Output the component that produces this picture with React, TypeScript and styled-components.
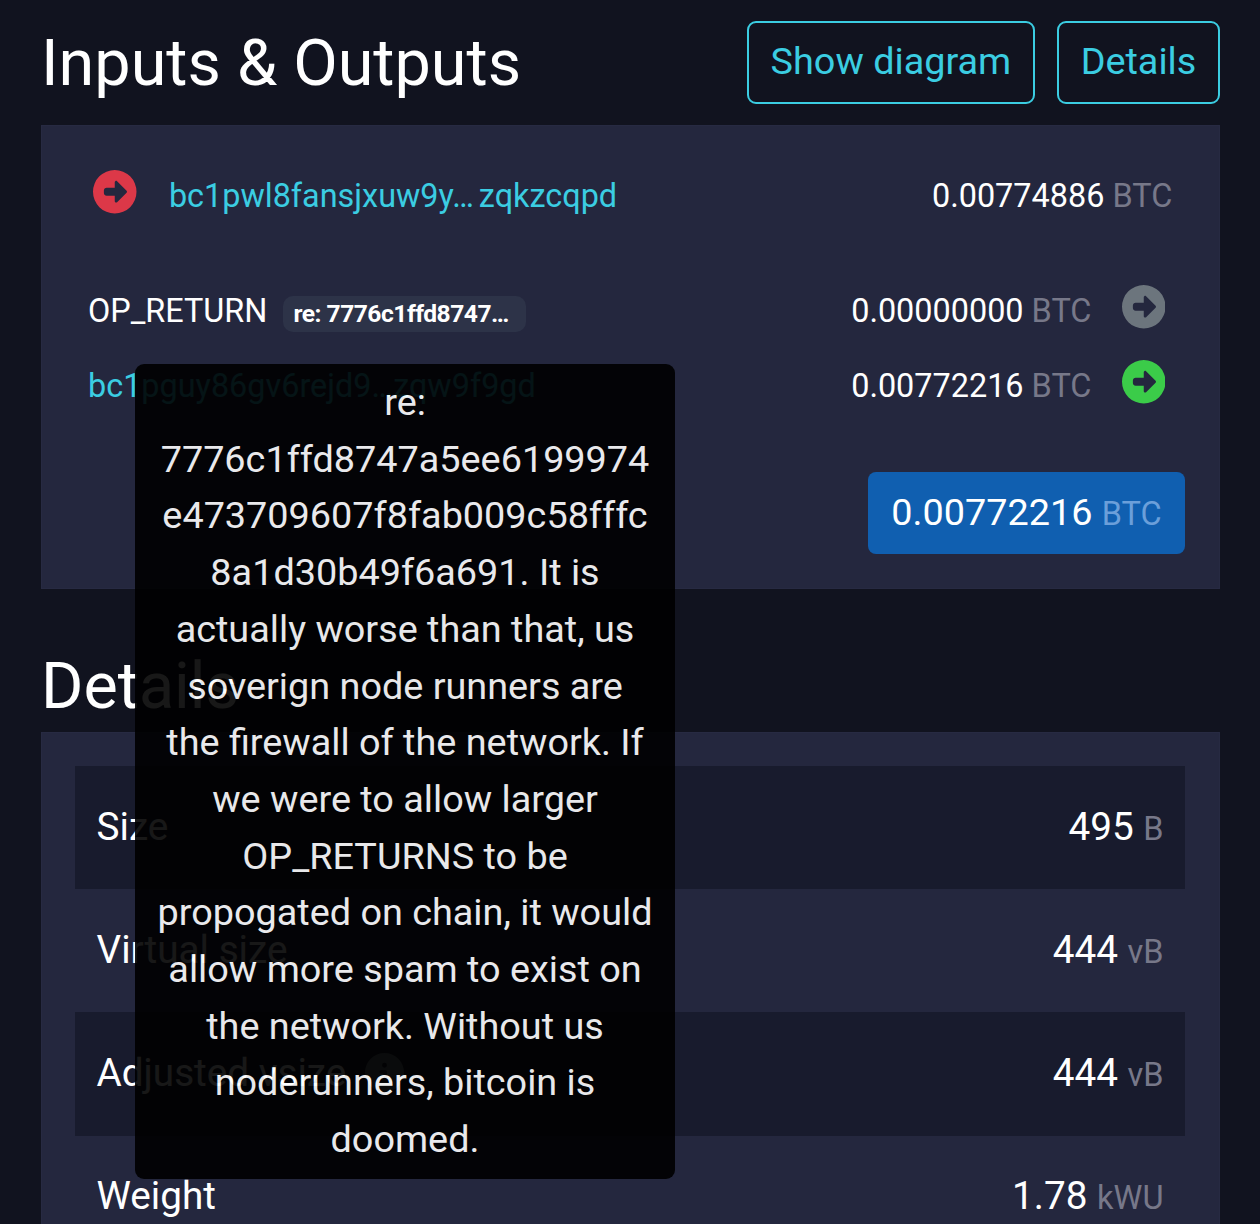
import React from 'react';
import styled, { createGlobalStyle } from 'styled-components';
import { FaCircleRight, FaCircleInfo } from 'react-icons/fa6';

const GlobalStyle = createGlobalStyle`
  *, *::before, *::after { box-sizing: border-box; }
  body {
    margin: 0;
    background: #11131f;
    color: #fff;
    font-family: Roboto, "Liberation Sans", sans-serif;
    font-size: 37.8px;
    line-height: 1.5;
  }
`;

const Page = styled.main`
  height: 1224px;
  overflow: hidden;
  padding: 21px 40px 0 41px;
`;

const SectionHeader = styled.header<{ $gapTop?: number; $height: number }>`
  display: flex;
  align-items: center;
  height: ${(p) => p.$height}px;
  margin-top: ${(p) => p.$gapTop ?? 0}px;
`;

const Title = styled.h2`
  flex: 1;
  margin: 0;
  font-size: 64.7px;
  font-weight: 400;
  line-height: 80px;
  white-space: nowrap;
`;

const ButtonGroup = styled.div`
  display: flex;
  gap: 22px;
`;

const OutlineButton = styled.button`
  height: 83px;
  padding: 0 21.7px 2px;
  border: 2px solid #3bcde2;
  border-radius: 9px;
  background: transparent;
  color: #3bcde2;
  font: inherit;
  white-space: nowrap;
`;

const Card = styled.section<{ $pad: string; $gapTop: number }>`
  margin-top: ${(p) => p.$gapTop}px;
  padding: ${(p) => p.$pad};
  background: #24273e;
  border: 1px solid #272a42;
`;

const FlowList = styled.div<{ $gapTop?: number }>`
  margin-top: ${(p) => p.$gapTop ?? 0}px;
`;

const FlowRow = styled.div`
  display: flex;
  align-items: center;
  height: 75px;
  padding: 0 12px;
  font-size: 32.4px;
  white-space: nowrap;
`;

const ArrowIcon = styled(FaCircleRight)<{ $tone: string }>`
  flex: none;
  width: 43.5px;
  height: 43.5px;
  margin: 0 7.6px 9px 5.4px;
  color: ${(p) => p.$tone};
`;

const Address = styled.a<{ $indent?: number; $gap: number }>`
  display: flex;
  gap: ${(p) => p.$gap}px;
  margin-left: ${(p) => p.$indent ?? 0}px;
  color: #3bcde2;
`;

const ScriptBadge = styled.span`
  height: 36px;
  margin: 5px 0 0 16px;
  padding: 0 17px 0 10px;
  border-radius: 10px;
  background: #2d3348;
  font-size: 24.6px;
  font-weight: 700;
  line-height: 35px;
  letter-spacing: -0.5px;
`;

const Amount = styled.span<{ $indent?: number }>`
  margin-left: auto;
  margin-right: ${(p) => p.$indent ?? 0}px;
`;

const Unit = styled.span<{ $tone?: string }>`
  color: ${(p) => p.$tone ?? '#777889'};
  font-size: 32.5px;
`;

const TotalRow = styled.div`
  display: flex;
  justify-content: flex-end;
  margin-top: 48px;
`;

const TotalButton = styled.button`
  width: 317px;
  height: 82px;
  padding: 0 0 1px;
  border: 0;
  border-radius: 8px;
  background: #105fb0;
  color: #fff;
  font: inherit;
  white-space: nowrap;
`;

const DetailRow = styled.div<{ $striped?: boolean }>`
  display: flex;
  align-items: center;
  justify-content: space-between;
  height: 123.2px;
  padding: 0 21.5px 1.5px;
  background: ${(p) => (p.$striped ? '#181b2d' : 'transparent')};
  font-size: 38.7px;
  white-space: nowrap;
`;

const DetailLabel = styled.span`
  display: flex;
  align-items: center;
  gap: 19px;
`;

const InfoIcon = styled(FaCircleInfo)`
  width: 39px;
  height: 39px;
  margin-bottom: 2px;
  color: #6c757d;
`;

const Tooltip = styled.div`
  position: absolute;
  left: 135px;
  top: 364px;
  width: 540px;
  height: 815px;
  padding: 10px 0;
  border-radius: 9px;
  background: #000;
  opacity: 0.9;
  text-align: center;
  line-height: 56.7px;
  white-space: nowrap;
`;

const TooltipLine = styled.div``;

const tooltipLines = [
  're:',
  '7776c1ffd8747a5ee6199974',
  'e473709607f8fab009c58fffc',
  '8a1d30b49f6a691. It is',
  'actually worse than that, us',
  'soverign node runners are',
  'the firewall of the network. If',
  'we were to allow larger',
  'OP_RETURNS to be',
  'propogated on chain, it would',
  'allow more spam to exist on',
  'the network. Without us',
  'noderunners, bitcoin is',
  'doomed.',
];

const details = [
  { label: 'Size', value: '495', unit: 'B' },
  { label: 'Virtual size', value: '444', unit: 'vB' },
  { label: 'Adjusted vsize', value: '444', unit: 'vB', info: true },
  { label: 'Weight', value: '1.78', unit: 'kWU' },
];

export default function App() {
  return (
    <Page>
      <GlobalStyle />
      <SectionHeader $height={83}>
        <Title>Inputs &amp; Outputs</Title>
        <ButtonGroup>
          <OutlineButton>Show diagram</OutlineButton>
          <OutlineButton>Details</OutlineButton>
        </ButtonGroup>
      </SectionHeader>

      <Card $pad="33px 34px 34px" $gapTop={21}>
        <FlowList>
          <FlowRow>
            <ArrowIcon $tone="#dc3848" />
            <Address $indent={24.4} $gap={5}>
              <span>bc1pwl8fansjxuw9y…</span>
              <span>zqkzcqpd</span>
            </Address>
            <Amount $indent={0.7}>
              0.00774886 <Unit>BTC</Unit>
            </Amount>
          </FlowRow>
        </FlowList>
        <FlowList $gapTop={40}>
          <FlowRow>
            <span>OP_RETURN</span>
            <ScriptBadge>re: 7776c1ffd8747…</ScriptBadge>
            <Amount $indent={25}>
              0.00000000 <Unit>BTC</Unit>
            </Amount>
            <ArrowIcon $tone="#6c757d" />
          </FlowRow>
          <FlowRow>
            <Address $gap={0}>
              <span>bc1pguy86gv6rejd9…</span>
              <span>zqw9f9gd</span>
            </Address>
            <Amount $indent={25}>
              0.00772216 <Unit>BTC</Unit>
            </Amount>
            <ArrowIcon $tone="#3bcc49" />
          </FlowRow>
        </FlowList>
        <TotalRow>
          <TotalButton>
            0.00772216 <Unit $tone="#6b9fda">BTC</Unit>
          </TotalButton>
        </TotalRow>
      </Card>

      <SectionHeader $height={80} $gapTop={57}>
        <Title>Details</Title>
      </SectionHeader>

      <Card $pad="33px 34px 0 33px" $gapTop={6}>
        {details.map((row, i) => (
          <DetailRow key={row.label} $striped={i % 2 === 0}>
            <DetailLabel>
              {row.label}
              {row.info && <InfoIcon />}
            </DetailLabel>
            <span>
              {row.value} <Unit>{row.unit}</Unit>
            </span>
          </DetailRow>
        ))}
      </Card>

      <Tooltip role="tooltip">
        {tooltipLines.map((line) => (
          <TooltipLine key={line}>{line}</TooltipLine>
        ))}
      </Tooltip>
    </Page>
  );
}
